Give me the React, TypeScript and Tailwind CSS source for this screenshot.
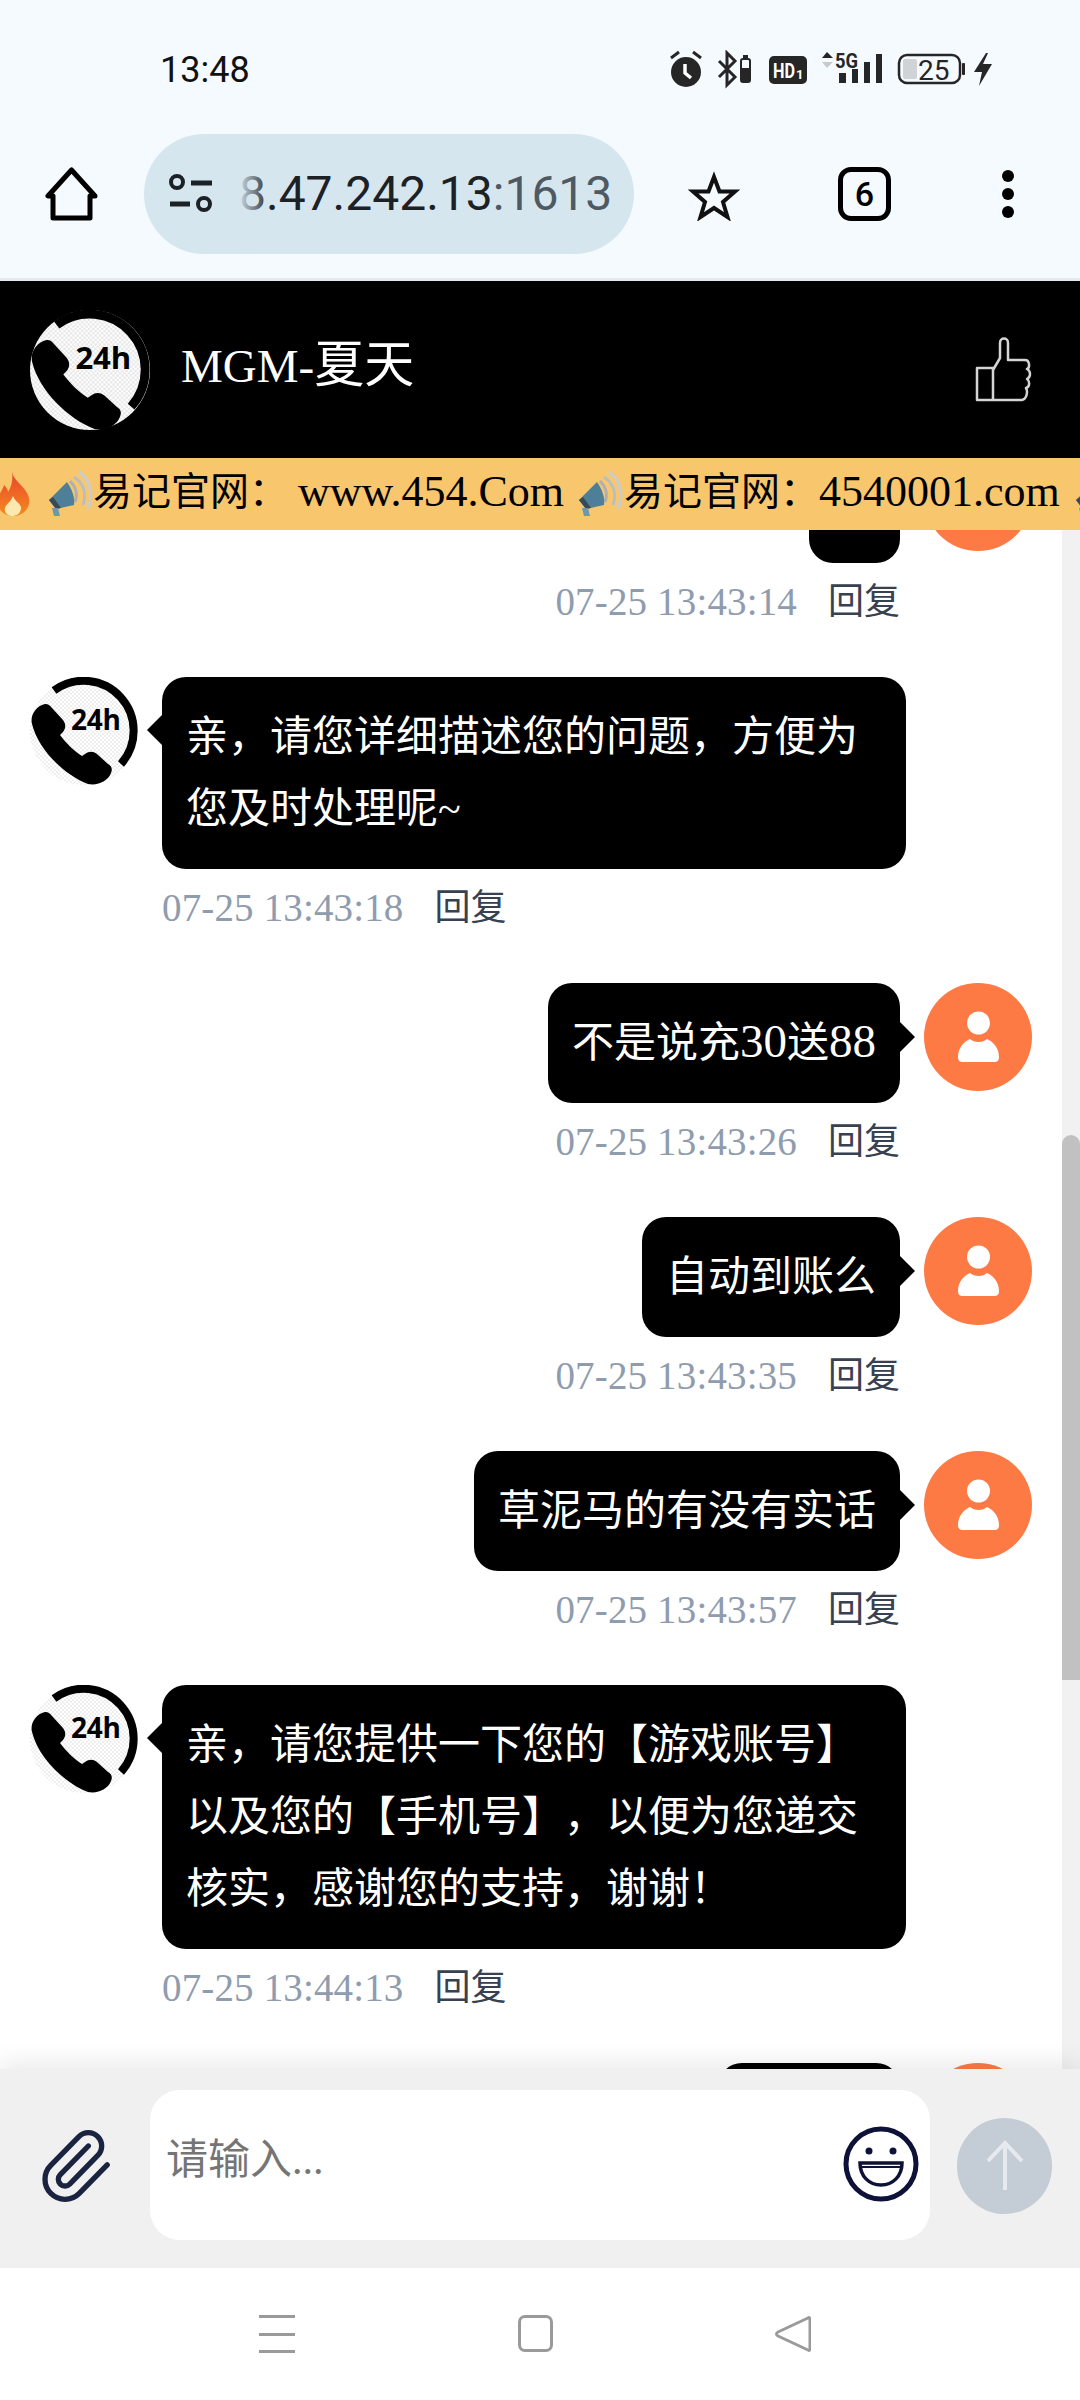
import React from 'react';
import { Paperclip } from 'lucide-react';

const serif = 'font-["Liberation_Serif","Noto_Sans_CJK_SC",serif]';

type Msg = {
  side: 'left' | 'right';
  time: string;
  text?: React.ReactNode;
  width?: string;
};

const messages: Msg[] = [
  { side: 'right', time: '07-25 13:43:14', width: 'w-[91px] h-[120px]' },
  { side: 'left', time: '07-25 13:43:18', text: '亲，请您详细描述您的问题，方便为您及时处理呢~' },
  {
    side: 'right',
    time: '07-25 13:43:26',
    text: (
      <>
        不是说充<span className="text-[47px] leading-none">30</span>送<span className="text-[47px] leading-none">88</span>
      </>
    ),
  },
  { side: 'right', time: '07-25 13:43:35', text: '自动到账么' },
  { side: 'right', time: '07-25 13:43:57', text: '草泥马的有没有实话' },
  { side: 'left', time: '07-25 13:44:13', text: '亲，请您提供一下您的【游戏账号】以及您的【手机号】，以便为您递交核实，感谢您的支持，谢谢！' },
  { side: 'right', time: '07-25 13:44:20', width: 'w-[182px] h-[120px]' },
];

function Logo({ size, id, light, dark }: { size: number; id: string; light: string; dark: string }) {
  return (
    <svg width={size} height={size} viewBox="0 0 108 108" className="shrink-0">
      <defs>
        <pattern id={id} width="4" height="4" patternUnits="userSpaceOnUse">
          <rect width="4" height="4" fill={light} />
          <rect width="2" height="2" fill={dark} />
          <rect x="2" y="2" width="2" height="2" fill={dark} />
        </pattern>
      </defs>
      <circle cx="54" cy="54" r="54" fill={`url(#${id})`} />
      <path d="M24 13.5 A50 50 0 0 1 91 87" fill="none" stroke="#000" strokeWidth="8" />
      <path
        d="M12 28 C5 31 0 39 2 47 C8 72 34 98 58 107 C68 109 78 104 81 96 C83 91 81 89 78 87 L67 77 C63 74 59 74 55 77 L52 79 C44 74 36 66 30 58 L33 55 C36 51 36 47 33 43 L22 31 C19 27 16 26 12 28 Z"
        fill="#000"
      />
      <text x="41" y="53" fontFamily="Open Sans, sans-serif" fontWeight="700" fontSize="28" fill="#000" textLength="50">
        24h
      </text>
    </svg>
  );
}

function UserAvatar() {
  return (
    <svg width="108" height="108" viewBox="0 0 108 108" className="shrink-0">
      <circle cx="54" cy="54" r="54" fill="#fe7a45" />
      <circle cx="54.5" cy="40" r="11.5" fill="#fff" />
      <path
        d="M34 74 C34 64 41 58 46 56 C50 60 59 60 63 56 C68 58 75 64 75 74 C75 78 73 79 70 79 L39 79 C36 79 34 78 34 74 Z"
        fill="#fff"
      />
    </svg>
  );
}

function Row({ m, idx }: { m: Msg; idx: number }) {
  const left = m.side === 'left';
  return (
    <div className={`flex flex-col ${left ? 'items-start pl-[30px]' : 'items-end pr-[30px]'}`}>
      <div className={`flex items-start gap-[24px] ${left ? '' : 'flex-row-reverse'}`}>
        {left ? <Logo size={108} id={`chat-logo-${idx}`} light="#ffffff" dark="#efefef" /> : <UserAvatar />}
        <div
          className={`relative rounded-[24px] bg-black px-[24px] py-[24px] text-[42px] leading-[72px] text-white [text-spacing-trim:space-all] ${
            m.width ? m.width : left ? 'max-w-[744px]' : ''
          }`}
        >
          {m.text}
          {left ? (
            <div className="absolute -left-[15px] top-[38px] border-y-[15px] border-r-[15px] border-y-transparent border-r-black" />
          ) : (
            <div className="absolute -right-[15px] top-[39px] border-y-[15px] border-l-[15px] border-y-transparent border-l-black" />
          )}
        </div>
      </div>
      <div
        className={`mb-[48px] mt-[12px] flex h-[54px] items-center gap-[31px] leading-[54px] ${
          left ? 'ml-[132px]' : 'mr-[132px]'
        }`}
      >
        <span className="text-[39px] tracking-[0.15px] text-[#8f9cae]">{m.time}</span>
        <span className="text-[36px] text-[#374151]">回复</span>
      </div>
    </div>
  );
}

function StatusIcons() {
  return (
    <svg width="322" height="40" viewBox="0 0 322 40">
      <circle cx="16" cy="22" r="15" fill="#262626" />
      <path d="M1 8 L9 2 M23 2 L31 8" stroke="#262626" strokeWidth="3" />
      <path d="M15 14 L15 23 L21 28" stroke="#fff" strokeWidth="3.5" fill="none" />
      <path d="M49 11 L65 27 L57 35 L57 3 L65 11 L49 27" stroke="#262626" strokeWidth="3" fill="none" />
      <rect x="71" y="9" width="9" height="23" rx="2" fill="none" stroke="#262626" strokeWidth="2" />
      <rect x="71" y="18" width="9" height="14" fill="#262626" />
      <rect x="73" y="5" width="5" height="3" fill="#262626" />
      <rect x="99" y="6" width="38" height="28" rx="5" fill="#262626" />
      <text x="103" y="28" fontFamily="Roboto, sans-serif" fontWeight="700" fontSize="21" fill="#fff" textLength="22" lengthAdjust="spacingAndGlyphs">
        HD
      </text>
      <text x="126" y="29" fontFamily="Roboto, sans-serif" fontWeight="700" fontSize="13" fill="#fff">
        1
      </text>
      <path d="M157 2 L163 8 H152 Z" fill="#262626" />
      <path d="M157 18 L163 12 H152 Z" fill="#c9c9c9" />
      <text x="165" y="18" fontFamily="Roboto, sans-serif" fontWeight="700" fontSize="20" fill="#262626" textLength="23" lengthAdjust="spacingAndGlyphs">
        5G
      </text>
      <rect x="169" y="23" width="7" height="10" fill="#262626" />
      <rect x="182" y="19" width="6" height="14" fill="#262626" />
      <rect x="194" y="12" width="6" height="21" fill="#262626" />
      <rect x="206" y="4" width="6" height="29" fill="#262626" />
      <rect x="229" y="5" width="61" height="28" rx="8" fill="none" stroke="#262626" strokeWidth="2.5" />
      <rect x="233" y="9" width="14" height="20" rx="2" fill="#cfd3d6" />
      <text x="248" y="30" fontFamily="Roboto, sans-serif" fontSize="28" fill="#262626">
        25
      </text>
      <rect x="292" y="13" width="3" height="12" rx="1" fill="#262626" />
      <path d="M316 3 L304 22 L312 22 L309 36 L322 14 L313 14 L318 3 Z" fill="#262626" />
    </svg>
  );
}

function Fire() {
  return (
    <svg width="36" height="44" viewBox="0 0 36 44" className="shrink-0">
      <defs>
        <linearGradient id="flame" x1="0" y1="0" x2="0" y2="1">
          <stop offset="0" stopColor="#e8452c" />
          <stop offset="1" stopColor="#f58a1f" />
        </linearGradient>
      </defs>
      <path d="M16 0 C18 10 30 14 33 26 C35 36 27 44 17 44 C7 44 0 36 2 27 C3 21 7 18 8 13 C11 16 12 18 12 20 C16 14 17 7 16 0 Z" fill="url(#flame)" />
      <path d="M17 24 C19 30 26 32 25 37 C24 42 20 44 16 44 C11 44 8 40 9 36 C10 32 15 30 17 24 Z" fill="#fde9b0" />
    </svg>
  );
}

function Speaker() {
  return (
    <svg width="46" height="46" viewBox="0 0 46 46" className="shrink-0">
      <path d="M27 6 C36 12 40 22 36 34" fill="none" stroke="#b9bec2" strokeWidth="3" />
      <path d="M32 1 C43 8 47 24 41 38" fill="none" stroke="#c9cdd0" strokeWidth="3" />
      <path d="M23 10 C29 16 31 24 28 31" fill="none" stroke="#aab0b5" strokeWidth="3" />
      <path d="M2 29 L20 11 C25 18 28 26 27 34 L9 38 Z" fill="#4d7f99" />
      <path d="M2 29 L9 38 L14 37 L6 26 Z" fill="#3a4a55" />
      <path d="M5 37 L11 37 L13 45 L7 45 Z" fill="#6d97ad" />
    </svg>
  );
}

function StatusAndToolbar() {
  return (
    <div className="h-[281px] shrink-0 border-b-[3px] border-[#e3e9ee] bg-[#f5faff] font-['Roboto',sans-serif]">
      <div className="flex h-[90px] items-start justify-between pl-[160px] pr-[88px]">
        <span className="mt-[48px] text-[36px] leading-[44px] text-[#111]">13:48</span>
        <div className="mt-[50px] h-[40px]">
          <StatusIcons />
        </div>
      </div>
      <div className="mt-[44px] flex h-[120px] items-center">
        <svg width="53" height="54" viewBox="0 0 53 54" className="ml-[45px] shrink-0">
          <path d="M26.5 3 L3 29 H8 V51 H45 V29 H50 Z" fill="none" stroke="#000" strokeWidth="5" strokeLinejoin="round" />
        </svg>
        <div className="relative ml-[46px] flex h-[120px] w-[490px] shrink-0 items-center overflow-hidden rounded-full bg-[#d6e6ef] pl-[25px]">
          <svg width="44" height="40" viewBox="0 0 44 40" className="shrink-0">
            <circle cx="8" cy="8" r="6" fill="none" stroke="#1c2126" strokeWidth="4" />
            <path d="M22 9 H43 M1 30 H21" stroke="#1c2126" strokeWidth="5" />
            <circle cx="35" cy="30" r="6" fill="none" stroke="#1c2126" strokeWidth="4" />
          </svg>
          <span className="ml-[26px] whitespace-nowrap text-[48px] leading-[60px] text-[#1c2126]">
            8.47.242.13<span className="text-[#4d5a63]">:1613</span>
          </span>
          <div className="absolute bottom-0 left-[93px] top-0 w-[34px] bg-gradient-to-r from-[#d6e6ef] to-transparent" />
        </div>
        <svg width="52" height="50" viewBox="0 0 52 50" className="ml-[54px] mt-[4px] shrink-0">
          <path d="M26 6 L31.5 20.5 L47 20.5 L35 31 L39.5 46 L26 37 L12.5 46 L17 31 L5 20.5 L20.5 20.5 Z" fill="none" stroke="#111" strokeWidth="4" />
        </svg>
        <div className="ml-[98px] flex h-[54px] w-[53px] shrink-0 items-center justify-center rounded-[13px] border-[5px] border-black text-[34px] font-medium leading-none text-black">
          6
        </div>
        <div className="ml-[111px] flex shrink-0 flex-col gap-[6px]">
          <div className="h-[12px] w-[12px] rounded-full bg-black" />
          <div className="h-[12px] w-[12px] rounded-full bg-black" />
          <div className="h-[12px] w-[12px] rounded-full bg-black" />
        </div>
      </div>
    </div>
  );
}

function Header() {
  return (
    <div className="flex h-[177px] shrink-0 items-center bg-black pl-[30px] pr-[47px]">
      <Logo size={120} id="head-logo" light="#ffffff" dark="#e6e6e6" />
      <div className="-mt-[8px] ml-[31px] text-[47px] leading-[60px] text-white">
        MGM-<span className="text-[50px]">夏天</span>
      </div>
      <svg width="58" height="66" viewBox="0 0 58 66" className="ml-auto">
        <path
          d="M2 31 H18 V63 H2 Z M18 33 L25 21 V6 C25 0 33 0 33 6 V23 H50 C55 23 55 31 52 32 C56 34 56 40 52 42 C55 44 55 50 51 51 C53 54 52 62 47 63 H18"
          fill="none"
          stroke="#d4d4d4"
          strokeWidth="2.5"
          strokeLinejoin="round"
        />
      </svg>
    </div>
  );
}

function Ticker() {
  return (
    <div className="flex h-[72px] shrink-0 items-center overflow-hidden whitespace-nowrap bg-[#f8c66c] text-[39px] leading-[66px] text-black">
      <div className="-ml-[4px] flex items-center">
        <Fire />
        <div className="ml-[15px]">
          <Speaker />
        </div>
        <span className="-mt-[4px]">易记官网：</span>
        <span className="-mt-[4px] ml-[10px] text-[44px]">www.454.Com</span>
        <div className="ml-[13px]">
          <Speaker />
        </div>
        <span className="-mt-[4px] ml-[1px]">易记官网：</span>
        <span className="-mt-[4px] text-[44px]">4540001.com</span>
        <div className="ml-[14px]">
          <Speaker />
        </div>
      </div>
    </div>
  );
}

function ChatList() {
  return (
    <div className="flex min-h-0 flex-1">
      <div className="min-w-0 flex-1 overflow-hidden bg-white">
        <div className="-mt-[87px]">
          {messages.map((m, i) => (
            <Row key={i} m={m} idx={i} />
          ))}
        </div>
      </div>
      <div className="w-[18px] shrink-0 bg-[#f1f1f1] pt-[605px]">
        <div className="h-[545px] rounded-t-full bg-[#c1c1c1]" />
      </div>
    </div>
  );
}

function InputBar() {
  return (
    <div className="relative flex h-[199px] shrink-0 items-center bg-[#f0f0f0] pl-[35px] shadow-[0_-6px_24px_rgba(0,0,0,0.09)]">
      <Paperclip size={80} strokeWidth={1.6} className="-mt-[6px] shrink-0 text-[#1a2340]" />
      <div className="-mt-[7px] ml-[35px] flex h-[150px] w-[780px] shrink-0 items-center justify-between rounded-[30px] bg-white pl-[16px] pr-[11px]">
        <span className="-mt-[10px] text-[42px] text-[#757575]">请输入...</span>
        <svg width="76" height="76" viewBox="0 0 76 76" className="-mt-[2px] shrink-0">
          <circle cx="38" cy="38" r="35" fill="none" stroke="#0e1238" strokeWidth="5" />
          <circle cx="26" cy="25" r="3.5" fill="#0e1238" />
          <circle cx="50" cy="25" r="3.5" fill="#0e1238" />
          <path d="M17 37 H59 C59 50 50 59 38 59 C26 59 17 50 17 37 Z" fill="none" stroke="#0e1238" strokeWidth="3.5" />
          <path d="M17 41 H59" stroke="#0e1238" strokeWidth="2" />
        </svg>
      </div>
      <div className="-mt-[5px] ml-[27px] flex h-[96px] w-[95px] shrink-0 items-center justify-center rounded-full bg-[#c4ccd6]">
        <svg width="40" height="52" viewBox="0 0 40 52">
          <path d="M20 3 V50 M3 21 L20 3 L37 21" fill="none" stroke="#e6eaee" strokeWidth="4" />
        </svg>
      </div>
    </div>
  );
}

function NavBar() {
  return (
    <div className="relative flex h-[132px] shrink-0 items-start bg-white pt-[47px]">
      <div className="ml-[259px] flex h-[38px] w-[36px] flex-col justify-between">
        <div className="h-[3px] bg-[#9a9a9a]" />
        <div className="h-[3px] bg-[#9a9a9a]" />
        <div className="h-[3px] bg-[#9a9a9a]" />
      </div>
      <div className="ml-[223px] h-[37px] w-[35px] rounded-[7px] border-[3px] border-[#9a9a9a]" />
      <svg width="36" height="38" viewBox="0 0 36 38" className="ml-[222px]">
        <path d="M33 3 C34 2 35 3 35 4 V33 C35 35 34 36 33 35 L3 21 C1 20 1 18 3 17 Z" fill="none" stroke="#9a9a9a" strokeWidth="3" strokeLinejoin="round" />
      </svg>
    </div>
  );
}

export default function App() {
  return (
    <div className={`flex h-[2400px] w-[1080px] flex-col overflow-hidden bg-white ${serif}`}>
      <StatusAndToolbar />
      <Header />
      <Ticker />
      <ChatList />
      <InputBar />
      <NavBar />
    </div>
  );
}
